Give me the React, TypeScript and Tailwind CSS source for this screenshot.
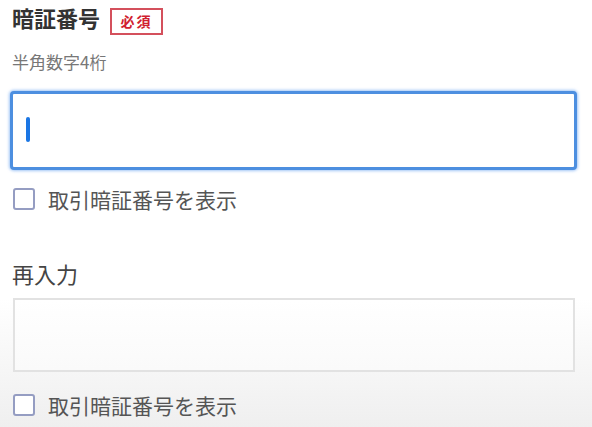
import React, { useState } from 'react';

function ShowCheckbox() {
  const [checked, setChecked] = useState(false);
  return (
    <label className="flex items-center h-[22px] gap-[13px] cursor-pointer">
      <span
        onClick={() => setChecked(!checked)}
        className={`w-[22px] h-[22px] rounded-[3px] border-2 border-[#959dc2] shrink-0 ${checked ? 'bg-[#4a8ee0]' : 'bg-white'}`}
      />
      <span className="text-[21px] leading-none text-[#555]">取引暗証番号を表示</span>
    </label>
  );
}

export default function App() {
  return (
    <div
      className="w-[592px] h-[427px] overflow-hidden bg-gradient-to-b from-white from-[70%] to-[#efefef] pl-[10px] pr-[15px] pt-[3px]"
      style={{ fontFamily: '"Noto Sans CJK JP", "Noto Sans", sans-serif' }}
    >
      <div className="flex items-start gap-[10px] pl-[2px]">
        <h1 className="text-[22px] font-bold text-[#333] leading-[28px]">暗証番号</h1>
        <span className="mt-[5px] h-[27px] w-[53px] border-2 border-[#d4505c] text-[#d0202f] text-[14px] font-bold tracking-[2px] flex items-center justify-center">
          必須
        </span>
      </div>
      <p className="text-[17px] text-[#777] mt-[15px] pl-[2px] leading-[24px]">半角数字4桁</p>

      <div className="mt-[17px] h-[79px] rounded-[4px] border-[3px] border-[#4d8fe0] shadow-[0_0_3px_1px_rgba(100,160,240,0.6)] bg-white flex items-center pl-[13px]">
        <span className="w-[4px] h-[25px] mb-[3px] rounded-full bg-[#1b76e4]" />
      </div>

      <div className="mt-[18px] pl-[3px]">
        <ShowCheckbox />
      </div>

      <p className="mt-[48px] text-[22px] text-[#444] leading-[30px] pl-[2px]">再入力</p>

      <div className="mt-[10px] ml-[3px] mr-[2px] h-[74px] border-2 border-[#e2e2e2] bg-gradient-to-b from-white to-[#fafafa]" />

      <div className="mt-[22px] pl-[3px]">
        <ShowCheckbox />
      </div>
    </div>
  );
}
